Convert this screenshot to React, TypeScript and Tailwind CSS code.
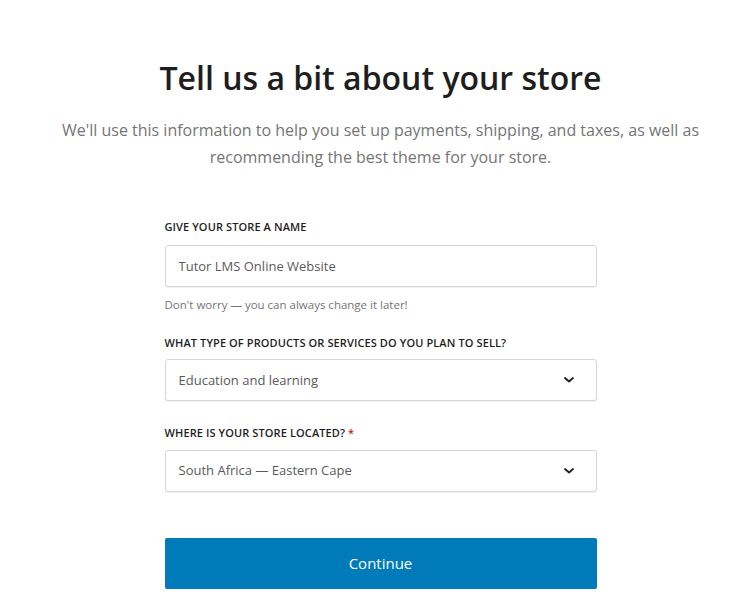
const ChevronDown = () => (
  <svg width="14" height="14" viewBox="0 0 14 14" fill="none" className="text-[#1e1e1e]">
    <path d="M3 5l4 3.5L11 5" stroke="currentColor" strokeWidth="1.8" strokeLinecap="round" strokeLinejoin="round" />
  </svg>
);

const Label = ({ children }: { children: React.ReactNode }) => (
  <label className="block text-[11px] font-semibold uppercase tracking-[0.01em] text-[#1e1e1e]">{children}</label>
);

const SelectBox = ({ value }: { value: string }) => (
  <div className="mt-[8px] flex h-[42px] items-center justify-between rounded-[3px] border border-[#d6d6d6] bg-white pl-[13px] pr-[20px] shadow-[0_1px_1px_rgba(0,0,0,0.06)]">
    <span className="text-[13px] text-[#5a5a5a]">{value}</span>
    <ChevronDown />
  </div>
);

export default function App() {
  return (
    <div className="min-h-[615px] bg-white pl-[29px] font-['Open_Sans',sans-serif]">
      <div className="flex flex-col items-center pt-[54px]">
        <h1 className="text-[32px] font-semibold leading-[48px] text-[#1e1e1e]">Tell us a bit about your store</h1>
        <p className="mt-[15px] w-[660px] text-center text-[16px] leading-[27px] text-[#757575]">
          We'll use this information to help you set up payments, shipping, and taxes, as well as recommending the best theme for your store.
        </p>
      </div>

      <form className="mx-auto mt-[48px] w-[432px]" onSubmit={(e) => e.preventDefault()}>
        <Label>Give your store a name</Label>
        <input
          type="text"
          defaultValue="Tutor LMS Online Website"
          className="mt-[9px] h-[42px] w-full rounded-[3px] border border-[#d6d6d6] bg-white px-[13px] text-[13px] text-[#5a5a5a] shadow-[0_1px_1px_rgba(0,0,0,0.06)] outline-none"
        />
        <p className="mt-[9px] text-[11.5px] text-[#757575]">Don't worry — you can always change it later!</p>

        <div className="mt-[22px]">
          <Label>What type of products or services do you plan to sell?</Label>
          <SelectBox value="Education and learning" />
        </div>

        <div className="mt-[24px]">
          <Label>
            Where is your store located? <span className="text-[#cc1818]">*</span>
          </Label>
          <SelectBox value="South Africa — Eastern Cape" />
        </div>

        <button
          type="submit"
          className="mt-[46px] h-[51px] w-full rounded-[2px] bg-[#007ab8] text-[15px] text-white"
        >
          Continue
        </button>
      </form>
    </div>
  );
}
